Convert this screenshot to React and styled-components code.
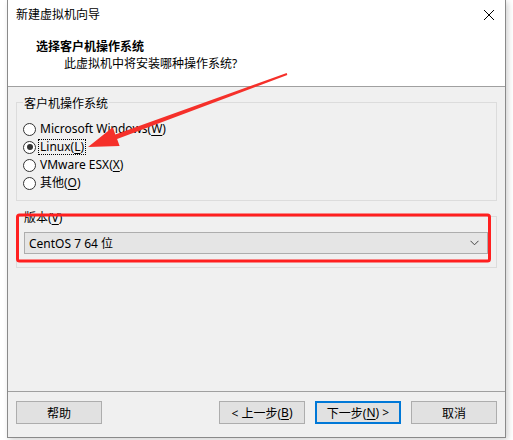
import React from "react";
import styled, { createGlobalStyle } from "styled-components";

const Global = createGlobalStyle`
  html, body { margin: 0; padding: 0; background: #ffffff; }
  body { width: 513px; height: 440px; overflow: hidden; }
  * { box-sizing: border-box; }
`;

const FONT = `"Noto Sans", "Noto Sans CJK SC", sans-serif`;

const Page = styled.div`
  position: relative;
  width: 513px;
  height: 440px;
  padding-left: 7px;
  font-family: ${FONT};
  font-size: 12px;
  color: #000;
`;

const Window = styled.div`
  width: 499px;
  height: 438px;
  border: 1px solid #8a8a8a;
  border-top: none;
  background: #f0f0f0;
  display: flex;
  flex-direction: column;
  box-shadow: 2px 2px 6px rgba(0, 0, 0, 0.18);
`;

const TitleBar = styled.div`
  height: 30px;
  background: #fff;
  display: flex;
  align-items: center;
  justify-content: space-between;
  padding: 0 10px 0 8px;
`;

const TitleText = styled.span`
  font-size: 12px;
  line-height: 1;
`;

const CloseIcon = styled.svg`
  width: 12px;
  height: 12px;
`;

const Header = styled.div`
  height: 57px;
  background: #fff;
  border-bottom: 1px solid #a0a0a0;
  padding: 9px 0 0 28px;
  display: flex;
  flex-direction: column;
  gap: 1px;
`;

const HeaderTitle = styled.div`
  font-weight: bold;
  font-size: 12px;
  line-height: 16px;
`;

const HeaderSub = styled.div`
  padding-left: 28px;
  font-size: 12px;
  line-height: 16px;
`;

const Body = styled.div`
  flex: 1;
  position: relative;
  padding: 15px 8px 0 8px;
  display: flex;
  flex-direction: column;
  gap: 15px;
`;

const Group = styled.div`
  position: relative;
  border: 1px solid #dcdcdc;
  padding: ${(p) => p.$pad};
`;

const Legend = styled.span`
  position: absolute;
  top: -7px;
  left: 6px;
  padding: 0 1px;
  background: #f0f0f0;
  line-height: 16px;
`;

const RadioList = styled.div`
  display: flex;
  flex-direction: column;
`;

const RadioRow = styled.div`
  height: 18px;
  display: flex;
  align-items: center;
  padding-left: 6px;
  gap: 3px;
`;

const RadioCircle = styled.span`
  width: 13px;
  height: 13px;
  border-radius: 50%;
  border: 1px solid #333;
  background: #fff;
  display: flex;
  align-items: center;
  justify-content: center;
  &::after {
    content: "";
    width: 6px;
    height: 6px;
    border-radius: 50%;
    background: ${(p) => (p.$checked ? "#333" : "transparent")};
  }
`;

const RadioLabel = styled.span`
  line-height: 14px;
  padding: 0 1px;
  outline: ${(p) => (p.$focus ? "1px dotted #000" : "none")};
`;

const Mn = styled.u`
  text-decoration: underline;
  text-underline-offset: 2px;
`;

const Select = styled.div`
  height: 22px;
  border: 1px solid #adadad;
  background: #e5e5e5;
  display: flex;
  align-items: center;
  justify-content: space-between;
  padding: 0 8px 0 4px;
`;

const Chevron = styled.svg`
  width: 9px;
  height: 6px;
`;

const Footer = styled.div`
  margin-top: auto;
  height: 46px;
  border-top: 1px solid #a0a0a0;
  padding: 9px 8px 0 8px;
  display: flex;
  gap: 10px;
`;

const Button = styled.button`
  width: 86px;
  height: 23px;
  font-family: ${FONT};
  font-size: 12px;
  background: #e1e1e1;
  border: ${(p) => (p.$primary ? "2px solid #0078d7" : "1px solid #adadad")};
  color: #000;
  padding: 0;
  margin-left: ${(p) => (p.$push ? "auto" : "0")};
  display: flex;
  align-items: center;
  justify-content: center;
`;

const Overlay = styled.svg`
  position: absolute;
  left: 0;
  top: 0;
  width: 513px;
  height: 440px;
  pointer-events: none;
`;

export default function App() {
  return (
    <Page>
      <Global />
      <Window>
        <TitleBar>
          <TitleText>新建虚拟机向导</TitleText>
          <CloseIcon viewBox="0 0 12 12">
            <path d="M1 1 L11 11 M11 1 L1 11" stroke="#000" strokeWidth="1" fill="none" />
          </CloseIcon>
        </TitleBar>
        <Header>
          <HeaderTitle>选择客户机操作系统</HeaderTitle>
          <HeaderSub>此虚拟机中将安装哪种操作系统?</HeaderSub>
        </Header>
        <Body>
          <Group $pad="17px 0 8px 0">
            <Legend>客户机操作系统</Legend>
            <RadioList>
              <RadioRow>
                <RadioCircle />
                <RadioLabel>
                  Microsoft Windows(<Mn>W</Mn>)
                </RadioLabel>
              </RadioRow>
              <RadioRow>
                <RadioCircle $checked />
                <RadioLabel $focus>
                  Linux(<Mn>L</Mn>)
                </RadioLabel>
              </RadioRow>
              <RadioRow>
                <RadioCircle />
                <RadioLabel>
                  VMware ESX(<Mn>X</Mn>)
                </RadioLabel>
              </RadioRow>
              <RadioRow>
                <RadioCircle />
                <RadioLabel>
                  其他(<Mn>O</Mn>)
                </RadioLabel>
              </RadioRow>
            </RadioList>
          </Group>
          <Group $pad="15px 8px 13px 7px">
            <Legend>
              版本(<Mn>V</Mn>)
            </Legend>
            <Select>
              <span>CentOS 7 64 位</span>
              <Chevron viewBox="0 0 9 6">
                <path d="M0.5 0.8 L4.5 4.8 L8.5 0.8" stroke="#444" strokeWidth="1" fill="none" />
              </Chevron>
            </Select>
          </Group>
        </Body>
        <Footer>
          <Button>帮助</Button>
          <Button $push>
            &lt; 上一步(<Mn>B</Mn>)
          </Button>
          <Button $primary>
            下一步(<Mn>N</Mn>) &gt;
          </Button>
          <Button>取消</Button>
        </Footer>
      </Window>
      <Overlay viewBox="0 0 513 440">
        <rect x="17.5" y="215" width="472" height="46" rx="2" fill="none" stroke="#ff1f1f" strokeWidth="3" />
        <polygon
          points="287.3,74.9 117.1,139.0 119.6,146.1 88,147 112.8,127.3 115.3,134.4 286.7,73.1"
          fill="#f5302a"
        />
      </Overlay>
    </Page>
  );
}
